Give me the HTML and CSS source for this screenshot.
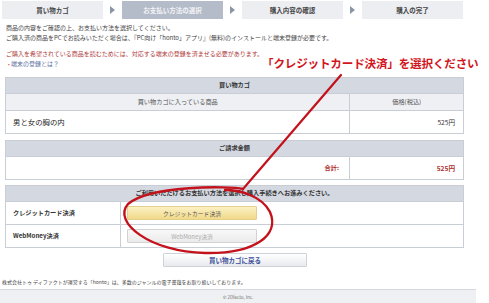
FILE: index.html
```html
<!DOCTYPE html>
<html lang="ja">
<head>
  <meta charset="UTF-8" />
  <title>お支払い方法の選択</title>
  <link rel="stylesheet" href="styles.css">
</head>
<body>
  <div class="page">
    <!-- steps -->
    <div class="steps">
      <div class="step">買い物カゴ</div>
      <div class="arrow"></div>
      <div class="step active">お支払い方法の選択</div>
      <div class="arrow"></div>
      <div class="step">購入内容の確認</div>
      <div class="arrow"></div>
      <div class="step">購入の完了</div>
    </div>

    <div class="intro">
      <p>商品の内容をご確認の上、お支払い方法を選択してください。</p>
      <p>ご購入済の商品をPCでお読みいただく場合は、『PC向け「honto」アプリ』(無料)のインストールと端末登録が必要です。</p>
      <p class="warn">ご購入を希望されている商品を読むためには、対応する端末の登録を済ませる必要があります。</p>
      <p class="link"><span class="dot">•</span> 端末の登録とは？</p>
    </div>

    <table class="box cart">
      <tr><th colspan="2" class="head">買い物カゴ</th></tr>
      <tr class="sub"><td class="c-left">買い物カゴに入っている商品</td><td class="c-right">価格(税込)</td></tr>
      <tr class="row"><td class="title">男と女の胸の内</td><td class="price">525円</td></tr>
    </table>

    <table class="box bill">
      <tr><th colspan="2" class="head">ご請求金額</th></tr>
      <tr class="row"><td class="total-label">合計:</td><td class="price red">525円</td></tr>
    </table>

    <table class="box pay">
      <tr><th colspan="2" class="head">ご利用いただけるお支払い方法を選択し購入手続きへお進みください。</th></tr>
      <tr class="row"><td class="pay-name">クレジットカード決済</td><td><button class="btn yellow">クレジットカード決済</button></td></tr>
      <tr class="row"><td class="pay-name">WebMoney決済</td><td><button class="btn grey">WebMoney決済</button></td></tr>
    </table>

    <div class="back-wrap"><button class="btn back">買い物カゴに戻る</button></div>

    <p class="about">株式会社トゥ ディファクトが運営する「honto」は、多数のジャンルの電子書籍をお取り扱いしております。</p>
  </div>
  <div class="footer">© 2Dfacto, Inc.</div>

  <!-- red annotation drawn over the page -->
  <div class="note">「クレジットカード決済」を選択ください</div>
  <svg class="marks" width="489" height="303" viewBox="0 0 489 303">
    <line x1="341" y1="75" x2="243" y2="189" stroke="#c3121c" stroke-width="2.2" stroke-linecap="round"/>
    <path d="M243 189 C 230 186, 150 185, 128 204 C 112 222, 150 252, 205 253 C 255 254, 280 235, 270 212 C 262 196, 240 190, 225 190" fill="none" stroke="#c3121c" stroke-width="2.4" stroke-linecap="round"/>
  </svg>
</body>
</html>
```

FILE: styles.css
```css
body {
  margin: 0;
  font-family: "Noto Sans CJK JP", "Noto Sans", sans-serif;
  background: #fff;
  color: #333;
  width: 489px;
  height: 303px;
  overflow: hidden;
  position: relative;
}

.page {
  width: 459px;
  margin-left: 5px;
  padding-top: 1px;
}

/* steps */
.steps {
  display: flex;
  align-items: center;
  height: 18px;
  margin-left: -3px;
}

.step {
  width: 101px;
  height: 18px;
  line-height: 18px;
  background: #eceef2;
  font-size: 6.5px;
  font-weight: 700;
  color: #444;
  text-align: center;
}

.step.active {
  background: #b4bcc9;
  color: #f4f5f8;
}

.arrow {
  width: 19px;
  display: flex;
  justify-content: center;
}

.arrow::before {
  content: "";
  border-left: 5px solid #8a95a6;
  border-top: 4px solid transparent;
  border-bottom: 4px solid transparent;
}

/* intro */
.intro {
  padding: 4px 0 0 1px;
  font-size: 6px;
  color: #444;
}

.intro p {
  margin: 0;
  line-height: 10px;
}

.intro .warn {
  color: #b03a3a;
  margin-top: 6px;
}

.intro .link {
  color: #5a6fa0;
}

.intro .dot {
  color: #d44;
  font-size: 5px;
  margin-left: 2px;
}

/* tables */
.box {
  width: 459px;
  border-collapse: collapse;
  border: 1px solid #c9cdd5;
  font-size: 6.2px;
  color: #333;
}

.box th,
.box td {
  padding: 0;
  line-height: 1;
}

.cart { margin-top: 8px; }
.bill { margin-top: 6px; }
.pay { margin-top: 5px; }

.head {
  background: #d3d8e1;
  height: 15px;
  font-weight: 700;
  text-align: center;
  border-bottom: 1px solid #c9cdd5;
}

.sub td {
  background: #eef0f4;
  height: 16px;
  text-align: center;
  color: #555;
  border-bottom: 1px solid #c9cdd5;
}

.c-left { width: 345px; }
.c-right { border-left: 1px solid #c9cdd5; }

.row td {
  height: 22px;
  border-bottom: 1px solid #c9cdd5;
}

.box .title {
  font-size: 7.4px;
  padding-left: 7px;
  color: #222;
}

.box .price {
  text-align: right;
  padding-right: 8px;
  border-left: 1px solid #c9cdd5;
  width: 105px;
  font-size: 6.6px;
}

.red { color: #b0302e; font-weight: 700; }

.box .total-label {
  text-align: right;
  padding-right: 10px;
  font-weight: 700;
  color: #b0302e;
}

.box .pay-name {
  width: 107px;
  padding-left: 7px;
  border-right: 1px solid #c9cdd5;
  font-weight: 700;
}

.btn {
  font-family: inherit;
  font-size: 5.8px;
  height: 14px;
  width: 130px;
  margin-left: 6px;
  padding: 0;
  border: 1px solid #d2d2d2;
  border-radius: 1px;
  display: block;
}

.yellow {
  background: linear-gradient(#fbf1c4, #f1d98a);
  border-color: #e4cf8a;
  color: #555;
}

.grey {
  background: linear-gradient(#f8f8f8, #ebebeb);
  color: #aaa;
}

.back-wrap {
  padding-top: 5px;
  padding-left: 158px;
}

.back {
  margin: 0;
  width: 144px;
  height: 14px;
  background: linear-gradient(#fff, #e9eaee);
  border: 1px solid #cfd2d8;
  color: #3b4f9a;
  font-size: 6.5px;
  font-weight: 700;
}

.about {
  margin: 11px 0 0 -3px;
  font-size: 5px;
  color: #444;
  line-height: 8px;
}

.footer {
  position: absolute;
  left: 0;
  top: 289px;
  width: 476px;
  height: 14px;
  background: #eef0f3;
  border-top: 1px solid #d5d8dd;
  text-align: center;
  font-size: 4.5px;
  line-height: 14px;
  color: #777;
}

/* annotation overlay */
.note {
  position: absolute;
  left: 262px;
  top: 55px;
  font-size: 11.6px;
  font-weight: 700;
  color: #d2161e;
  white-space: nowrap;
  letter-spacing: -0.2px;
}

.marks {
  position: absolute;
  left: 0;
  top: 0;
  pointer-events: none;
}
```
